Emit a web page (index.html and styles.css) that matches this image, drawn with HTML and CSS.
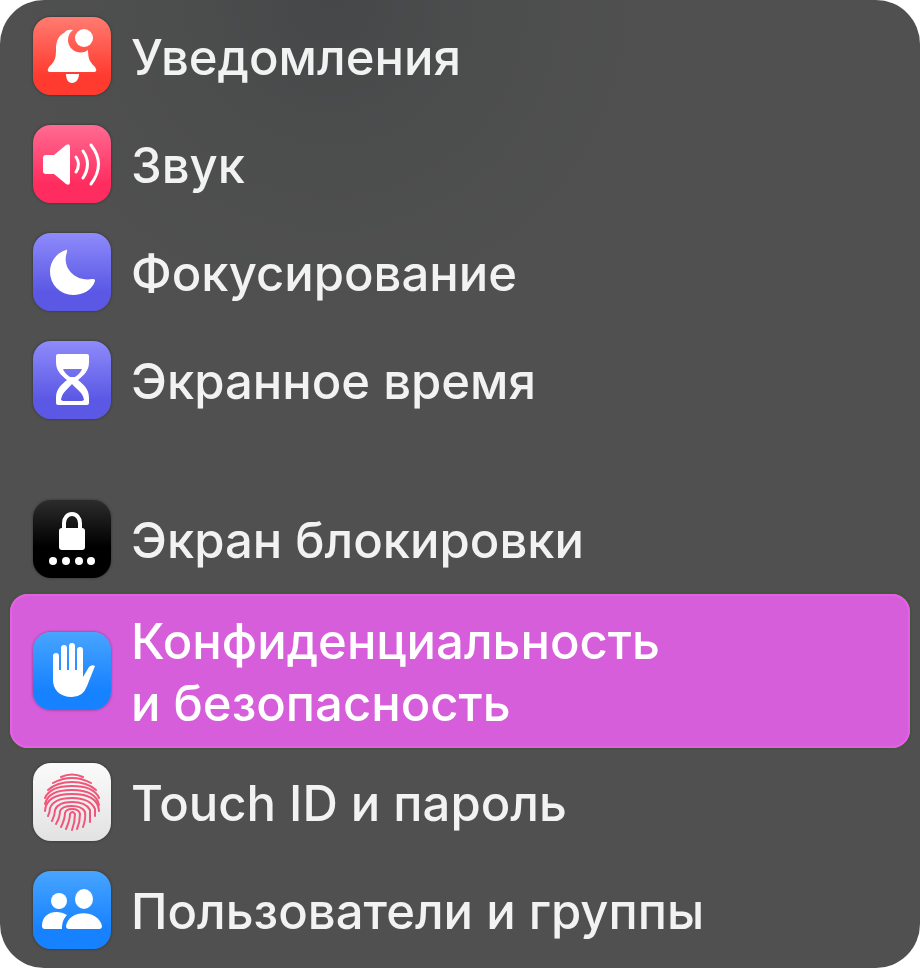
FILE: index.html
```html
<!DOCTYPE html>
<html lang="ru">
<head>
  <meta charset="utf-8">
  <meta name="viewport" content="width=device-width, initial-scale=1">
  <title>Системные настройки</title>
  <link rel="stylesheet" href="styles.css">
</head>
<body>
  <nav class="sidebar">
    <ul class="group">
      <li>
        <a class="item" href="#notifications">
          <svg class="icon red" viewBox="0 0 78 78" aria-hidden="true">
            <path d="M40 13c-4-1-7 0-9 3-6 3-8 9-8 16 0 9-1 12-6 17-3 3-3 6 0 6h44c3 0 3-3 0-6-4-4-6-7-6-16a12 12 0 0 1-15-20z"/>
            <circle cx="51" cy="21" r="9"/>
            <path d="M33 57h13c0 5-3 9-7 9s-6-4-6-9z"/>
          </svg>
          <span class="label">Уведомления</span>
        </a>
      </li>
      <li>
        <a class="item" href="#sound">
          <svg class="icon pink" viewBox="0 0 78 78" aria-hidden="true">
            <path d="M13 30h8l12-10q4-2 4 2v35q0 4-4 2L21 49h-8q-3 0-3-3V33q0-3 3-3z"/>
            <path class="line" d="M43 32q5 7 0 15M50 26q9 13 0 27M58 20q15 19 0 39"/>
          </svg>
          <span class="label">Звук</span>
        </a>
      </li>
      <li>
        <a class="item" href="#focus">
          <svg class="icon purple" viewBox="0 0 78 78" aria-hidden="true">
            <path d="M33 17c-10 3-16 12-16 22a23 23 0 0 0 23 23c10 0 19-5 22-14 0-2-1-2-3-2-16 3-31-11-25-27 0-2 0-3-1-2z"/>
          </svg>
          <span class="label">Фокусирование</span>
        </a>
      </li>
      <li>
        <a class="item" href="#screen-time">
          <svg class="icon purple" viewBox="0 0 78 78" aria-hidden="true">
            <path fill-rule="evenodd" d="M25 13h29q2 0 2 2v6c0 9-5 13-11 18 6 5 11 9 11 18v5q0 2-2 2H25q-2 0-2-2v-5c0-9 5-13 11-18-6-5-11-9-11-18v-6q0-2 2-2zM30 28c1 3 3 5 7 8h5c4-3 6-5 7-8zM39 43c-4 5-10 8-11 16l2 1h19l2-1c-1-8-8-11-12-16z"/>
          </svg>
          <span class="label">Экранное время</span>
        </a>
      </li>
    </ul>
    <ul class="group">
      <li>
        <a class="item" href="#lock-screen">
          <svg class="icon black" viewBox="0 0 78 78" aria-hidden="true">
            <path class="line shackle" d="M31 30v-7a8 9 0 0 1 16 0v7"/>
            <rect x="26" y="28" width="26" height="22" rx="3"/>
            <circle cx="20" cy="61" r="4"/>
            <circle cx="33" cy="61" r="4"/>
            <circle cx="46" cy="61" r="4"/>
            <circle cx="58" cy="61" r="4"/>
          </svg>
          <span class="label">Экран блокировки</span>
        </a>
      </li>
      <li>
        <a class="item selected" href="#privacy" aria-current="page">
          <svg class="icon blue" viewBox="0 0 78 78" aria-hidden="true">
            <path class="line finger" d="M23 24v20M31 16v28M39 14v28M47 18v27"/>
            <path d="M20 38h30v7l6-10q3-3 6-1l-8 20q-4 11-15 11c-13 0-19-8-19-17z"/>
          </svg>
          <span class="label">Конфиденциальность<br>и безопасность</span>
        </a>
      </li>
      <li>
        <a class="item" href="#touch-id">
          <svg class="icon light" viewBox="0 0 78 78" aria-hidden="true">
            <path class="print" d="M28 14q11-5 22 0M20 20q9-5 19-5t19 5M15 27q9-8 24-8t24 8M12 35q5-12 27-12t27 12M12 41q3-14 27-14t27 15M12 48q1-17 27-17t27 17M15 53q2-4 2-8 4-10 22-10t23 11v7M19 58q3-6 3-11 3-8 17-8t18 8v12M23 61q4-7 4-13 2-5 12-5t13 6q1 7-2 15M28 64q4-8 4-14 1-4 7-4 7 0 8 5 0 8-3 15M33 66q4-9 4-15 2-4 5 0 0 8-3 16"/>
          </svg>
          <span class="label">Touch ID и пароль</span>
        </a>
      </li>
      <li>
        <a class="item" href="#users">
          <svg class="icon blue" viewBox="0 0 78 78" aria-hidden="true">
            <circle cx="26" cy="30" r="8"/>
            <path d="M34 44c-3 3-5 7-5 14H12q-3 0-3-3c0-14 15-17 25-11z"/>
            <ellipse cx="51" cy="28" rx="9" ry="10"/>
            <path d="M36 58q-3 0-3-3c3-17 32-17 36 0q0 3-3 3z"/>
          </svg>
          <span class="label">Пользователи и группы</span>
        </a>
      </li>
    </ul>
  </nav>
</body>
</html>
```

FILE: styles.css
```css
* {
  box-sizing: border-box;
}
body {
  margin: 0;
  background: #fff;
  font-family: Inter, "Liberation Sans", sans-serif;
}
.sidebar {
  display: flex;
  flex-direction: column;
  gap: 51px;
  min-height: 100vh;
  padding: 2px 10px 3px;
  border-radius: 44px;
  background: radial-gradient(circle at 330px 0, #464748 0, #4c4d4d 160px, #505050 320px);
}
.group {
  margin: 0;
  padding: 0;
  list-style: none;
}
.item {
  display: flex;
  align-items: center;
  gap: 20px;
  min-height: 108px;
  padding: 0 23px;
  border-radius: 18px;
  color: #f2f2f2;
  font-size: 49px;
  font-weight: 500;
  line-height: 62px;
  text-decoration: none;
}
.label {
  padding-top: 4px;
}
.selected {
  min-height: 154px;
  margin-top: 1px;
  background: #d75eda;
  box-shadow: inset 0 0 0 2px #e560e7, 0 0 0 2px #45543f;
  color: #fff;
}
.icon {
  flex: none;
  width: 78px;
  height: 78px;
  border-radius: 18px;
  box-shadow: 0 0 3px rgba(0, 0, 0, 0.4);
  fill: #fff;
}
.red {
  background: linear-gradient(#ff7b70, #ff3b30 75%);
}
.pink {
  background: linear-gradient(#ff6b92, #ff2d5f 75%);
}
.purple {
  background: linear-gradient(#8e8bfb, #5b58e5 75%);
}
.black {
  background: linear-gradient(#2c2c2c, #000 60%);
}
.blue {
  background: linear-gradient(#48a5ff, #1782ff 75%);
}
.light {
  background: linear-gradient(#fbfbfb, #e2e2e2);
}
.line {
  fill: none;
  stroke: #fff;
  stroke-width: 3;
  stroke-linecap: round;
}
.shackle {
  stroke-width: 4;
}
.finger {
  stroke-width: 6;
}
.print {
  fill: none;
  stroke: #f0557a;
  stroke-width: 2;
  stroke-linecap: round;
}
```
